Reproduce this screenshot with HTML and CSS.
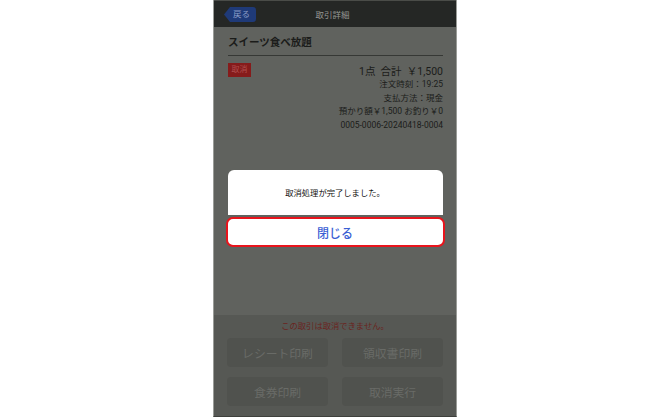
FILE: index.html
```html
<!DOCTYPE html>
<html lang="ja">
<head>
<meta charset="utf-8">
<title>取引詳細</title>
<link rel="stylesheet" href="styles.css">
</head>
<body>
<div class="phone">
  <header class="header">
    <div class="header-left">
      <span class="back">
        <svg class="back-arrow" width="6" height="15" viewBox="0 0 6 15"><path d="M6 0 L0 7.5 L6 15 Z" fill="#1f3a78"/></svg>
        <span class="back-label">戻る</span>
      </span>
    </div>
    <div class="header-title">取引詳細</div>
    <div></div>
  </header>

  <main class="content">
    <h1 class="item-title">スイーツ食べ放題</h1>
    <div class="summary">
      <span class="badge">取消</span>
      <span class="total">1点&nbsp;&nbsp;合計&nbsp;&nbsp;￥1,500</span>
    </div>
    <div class="details">
      <div>注文時刻：19:25</div>
      <div>支払方法：現金</div>
      <div>預かり額￥1,500 お釣り￥0</div>
      <div>0005-0006-20240418-0004</div>
    </div>
  </main>

  <footer class="actions">
    <p class="warn">この取引は取消できません。</p>
    <div class="btn-grid">
      <div class="btn">レシート印刷</div>
      <div class="btn">領収書印刷</div>
      <div class="btn">食券印刷</div>
      <div class="btn">取消実行</div>
    </div>
  </footer>

  <div class="modal">
    <div class="dialog">
      <div class="dialog-msg">取消処理が完了しました。</div>
      <div class="dialog-btn">閉じる</div>
    </div>
  </div>
</div>
</body>
</html>
```

FILE: styles.css
```css
* { box-sizing: border-box; }
html, body { margin: 0; padding: 0; background: #ffffff; }
body {
  font-family: Roboto, "Noto Sans CJK JP", "Noto Sans", sans-serif;
  width: 670px;
  height: 418px;
  overflow: hidden;
}
.phone {
  position: relative;
  width: 244px;
  height: 417px;
  margin: 0 auto;
  display: flex;
  flex-direction: column;
  background: #60625e;
  border-left: 1px solid #9a9c98;
  border-right: 1px solid #9a9c98;
  border-bottom: 1px solid #3e403c;
}
.header {
  height: 27px;
  flex: none;
  background: #252725;
  border-top: 1px solid #4a4c48;
  display: grid;
  grid-template-columns: 1fr auto 1fr;
  align-items: center;
}
.header-left { padding-left: 10px; display: flex; }
.back { display: flex; align-items: center; height: 15px; }
.back-arrow { display: block; }
.back-label {
  background: #1f3a78;
  color: #8a9cc6;
  font-size: 8.5px;
  height: 15px;
  line-height: 15px;
  padding: 0 6px 0 3px;
  border-radius: 0 3px 3px 0;
}
.header-title {
  color: #969894;
  font-size: 8.5px;
  padding-right: 5px;
}
.content {
  flex: 1;
  padding: 8px 13px 0 14px;
  color: #1b1c1a;
}
.item-title {
  margin: 0;
  font-size: 10.5px;
  font-weight: 700;
  line-height: 16px;
  padding-bottom: 4px;
  border-bottom: 1.5px solid #363835;
}
.summary {
  margin-top: 7px;
  display: flex;
  justify-content: space-between;
  align-items: flex-start;
}
.badge {
  background: #861b1b;
  color: #b04e4e;
  font-size: 8px;
  line-height: 14px;
  height: 14px;
  padding: 0 3.5px;
  margin-top: 0;
}
.total {
  font-size: 10.5px;
  line-height: 15px;
  margin-top: 1px;
}
.details {
  text-align: right;
  font-size: 8.5px;
  line-height: 13.5px;
  margin-top: -1px;
}
.actions {
  flex: none;
  height: 101px;
  background: #565854;
  padding: 4px 13px 0 13px;
}
.warn {
  margin: 0;
  text-align: center;
  color: #6a2420;
  font-size: 8.3px;
  line-height: 14px;
}
.btn-grid {
  margin-top: 5px;
  display: grid;
  grid-template-columns: 1fr 1fr;
  column-gap: 14px;
  row-gap: 10px;
}
.btn {
  height: 29px;
  background: #50524e;
  border-radius: 4px;
  color: #696b67;
  font-size: 11.8px;
  display: flex;
  align-items: center;
  justify-content: center;
}
.modal {
  position: absolute;
  top: 170px;
  left: 0;
  right: 0;
  display: flex;
  justify-content: center;
}
.dialog {
  width: 215px;
  display: flex;
  flex-direction: column;
}
.dialog-msg {
  height: 45px;
  background: #ffffff;
  border-radius: 6px 6px 0 0;
  display: flex;
  align-items: center;
  justify-content: center;
  font-size: 8.3px;
  color: #111111;
  padding-bottom: 2px;
}
.dialog-btn {
  margin: 2px -2px 0;
  height: 30px;
  background: #ffffff;
  border: 2px solid #e8141c;
  border-radius: 7px;
  display: flex;
  align-items: center;
  justify-content: center;
  color: #3b5fd4;
  font-size: 12px;
  font-weight: 500;
}
```
